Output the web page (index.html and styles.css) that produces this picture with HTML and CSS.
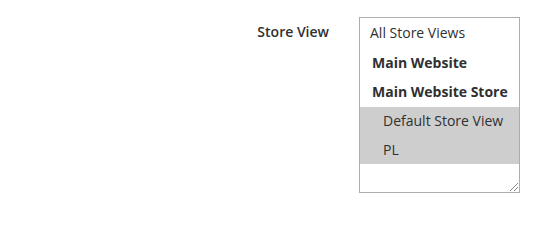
FILE: index.html
```html
<!DOCTYPE html>
<html>
<head>
<meta charset="utf-8">
<link rel="stylesheet" href="styles.css">
</head>
<body>
<div class="field">
  <label class="field-label">Store View</label>
  <div class="multiselect" role="listbox" aria-multiselectable="true">
    <div class="opt">All Store Views</div>
    <div class="group">Main Website</div>
    <div class="group">Main Website Store</div>
    <div class="opt sub selected">Default Store View</div>
    <div class="opt sub selected last">PL</div>
    <svg class="grip" width="9" height="9" viewBox="0 0 9 9">
      <line x1="1" y1="9" x2="9" y2="1" stroke="#8a8a8a" stroke-width="1"/>
      <line x1="5" y1="9" x2="9" y2="5" stroke="#8a8a8a" stroke-width="1"/>
    </svg>
  </div>
</div>
</body>
</html>
```
FILE: styles.css
```css
html, body {
  margin: 0;
  padding: 0;
  background: #ffffff;
}
body {
  font-family: "Open Sans", "Liberation Sans", sans-serif;
  font-size: 14px;
  color: #303030;
}
.field {
  display: flex;
  align-items: flex-start;
  padding-top: 17px;
}
.field-label {
  width: 329px;
  text-align: right;
  font-weight: 600;
  line-height: 30px;
  padding-right: 30px;
  box-sizing: border-box;
  width: 359px;
}
.multiselect {
  position: relative;
  width: 161px;
  height: 176px;
  box-sizing: border-box;
  border: 1px solid #adadad;
  padding-top: 0;
  background: #fff;
}
.opt, .group {
  height: 29.6px;
  line-height: 29.6px;
  white-space: nowrap;
  padding-left: 10px;
}
.group {
  font-weight: 700;
  padding-left: 12px;
}
.opt.sub {
  padding-left: 23px;
  height: 28.8px;
  line-height: 28.8px;
}
.selected {
  background: #cecece;
}
.grip {
  position: absolute;
  right: 1px;
  bottom: 1px;
}
```
